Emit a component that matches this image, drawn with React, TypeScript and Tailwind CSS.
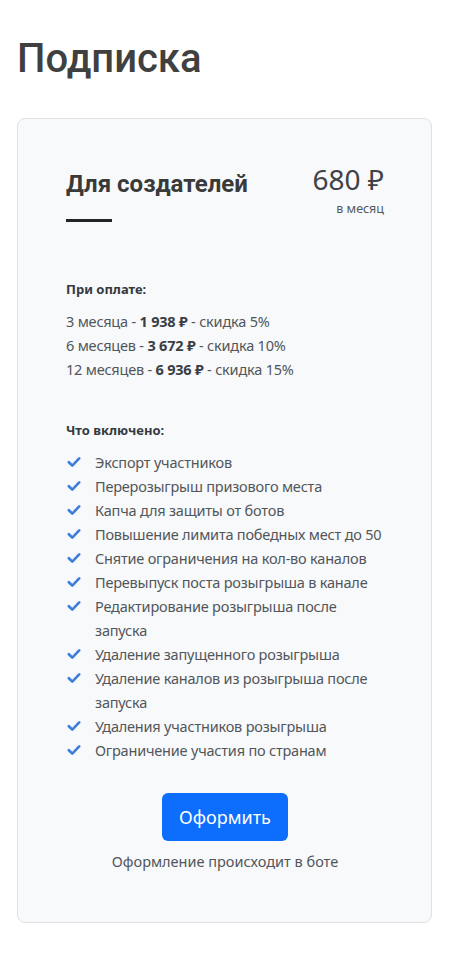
import React from "react";

const features: string[] = [
  "Экспорт участников",
  "Перерозыгрыш призового места",
  "Капча для защиты от ботов",
  "Повышение лимита победных мест до 50",
  "Снятие ограничения на кол-во каналов",
  "Перевыпуск поста розыгрыша в канале",
  "Редактирование розыгрыша после запуска",
  "Удаление запущенного розыгрыша",
  "Удаление каналов из розыгрыша после запуска",
  "Удаления участников розыгрыша",
  "Ограничение участия по странам",
];

function Check() {
  return (
    <svg width="14" height="12" viewBox="0 0 14 12" fill="none">
      <polyline
        points="1.8,6.2 5.3,9.6 12.2,2.4"
        stroke="#3b7ddd"
        strokeWidth="2.6"
        strokeLinecap="round"
        strokeLinejoin="round"
      />
    </svg>
  );
}

export default function App() {
  return (
    <div
      className="min-h-[955px] bg-white pl-[17px] pr-[26px] pt-[35px] pb-[34px]"
      style={{ fontFamily: '"Noto Sans", sans-serif' }}
    >
      <h1
        className="text-[40px] leading-[48px] font-medium text-[#404040]"
        style={{ fontFamily: "Roboto, sans-serif" }}
      >
        Подписка
      </h1>
      <div className="mt-[35px] rounded-lg border border-[#dee2e6] bg-[#f8f9fa] pl-[48px] pr-[47px] pt-[47px] pb-[49px]">
        <div className="flex items-start justify-between">
          <div className="flex flex-col pt-[4px]">
            <div
              className="text-[24px] leading-[29px] font-bold text-[#3a3a3a]"
              style={{ fontFamily: "Roboto, sans-serif" }}
            >
              Для создателей
            </div>
            <div className="mt-[20px] h-[3px] w-[46px] bg-[#212529]" />
          </div>
          <div className="flex flex-col items-end">
            <div className="text-[28px] leading-[26px] text-[#3f4246]">680 ₽</div>
            <div className="mt-[8px] text-[12.5px] leading-[18px] text-[#55595e]">в месяц</div>
          </div>
        </div>

        <div className="mt-[55px] text-[13px] leading-[24px] font-bold text-[#343a40]">При оплате:</div>
        <div className="mt-[8px] flex flex-col text-[14.5px] leading-[24px] tracking-[-0.2px] text-[#51565b]">
          <div>
            3 месяца - <b className="font-bold text-[#3a3f44]">1 938 ₽</b> - скидка 5%
          </div>
          <div>
            6 месяцев - <b className="font-bold text-[#3a3f44]">3 672 ₽</b> - скидка 10%
          </div>
          <div>
            12 месяцев - <b className="font-bold text-[#3a3f44]">6 936 ₽</b> - скидка 15%
          </div>
        </div>

        <div className="mt-[37px] text-[13px] leading-[24px] font-bold text-[#343a40]">Что включено:</div>
        <ul className="mt-[8px] flex flex-col text-[14.5px] leading-[24px] tracking-[-0.2px] text-[#51565b]">
          {features.map((f) => (
            <li key={f} className="flex items-start">
              <span className="flex h-[24px] w-[29px] shrink-0 items-center pl-[1px]">
                <Check />
              </span>
              <span>{f}</span>
            </li>
          ))}
        </ul>

        <div className="mt-[31px] flex flex-col items-center">
          <button className="h-[48px] rounded-[6px] bg-[#0d6efd] px-[17px] text-[18px] leading-[48px] text-white">
            Оформить
          </button>
          <div className="mt-[8px] text-[14.5px] leading-[24px] text-[#51565b]">Оформление происходит в боте</div>
        </div>
      </div>
    </div>
  );
}
